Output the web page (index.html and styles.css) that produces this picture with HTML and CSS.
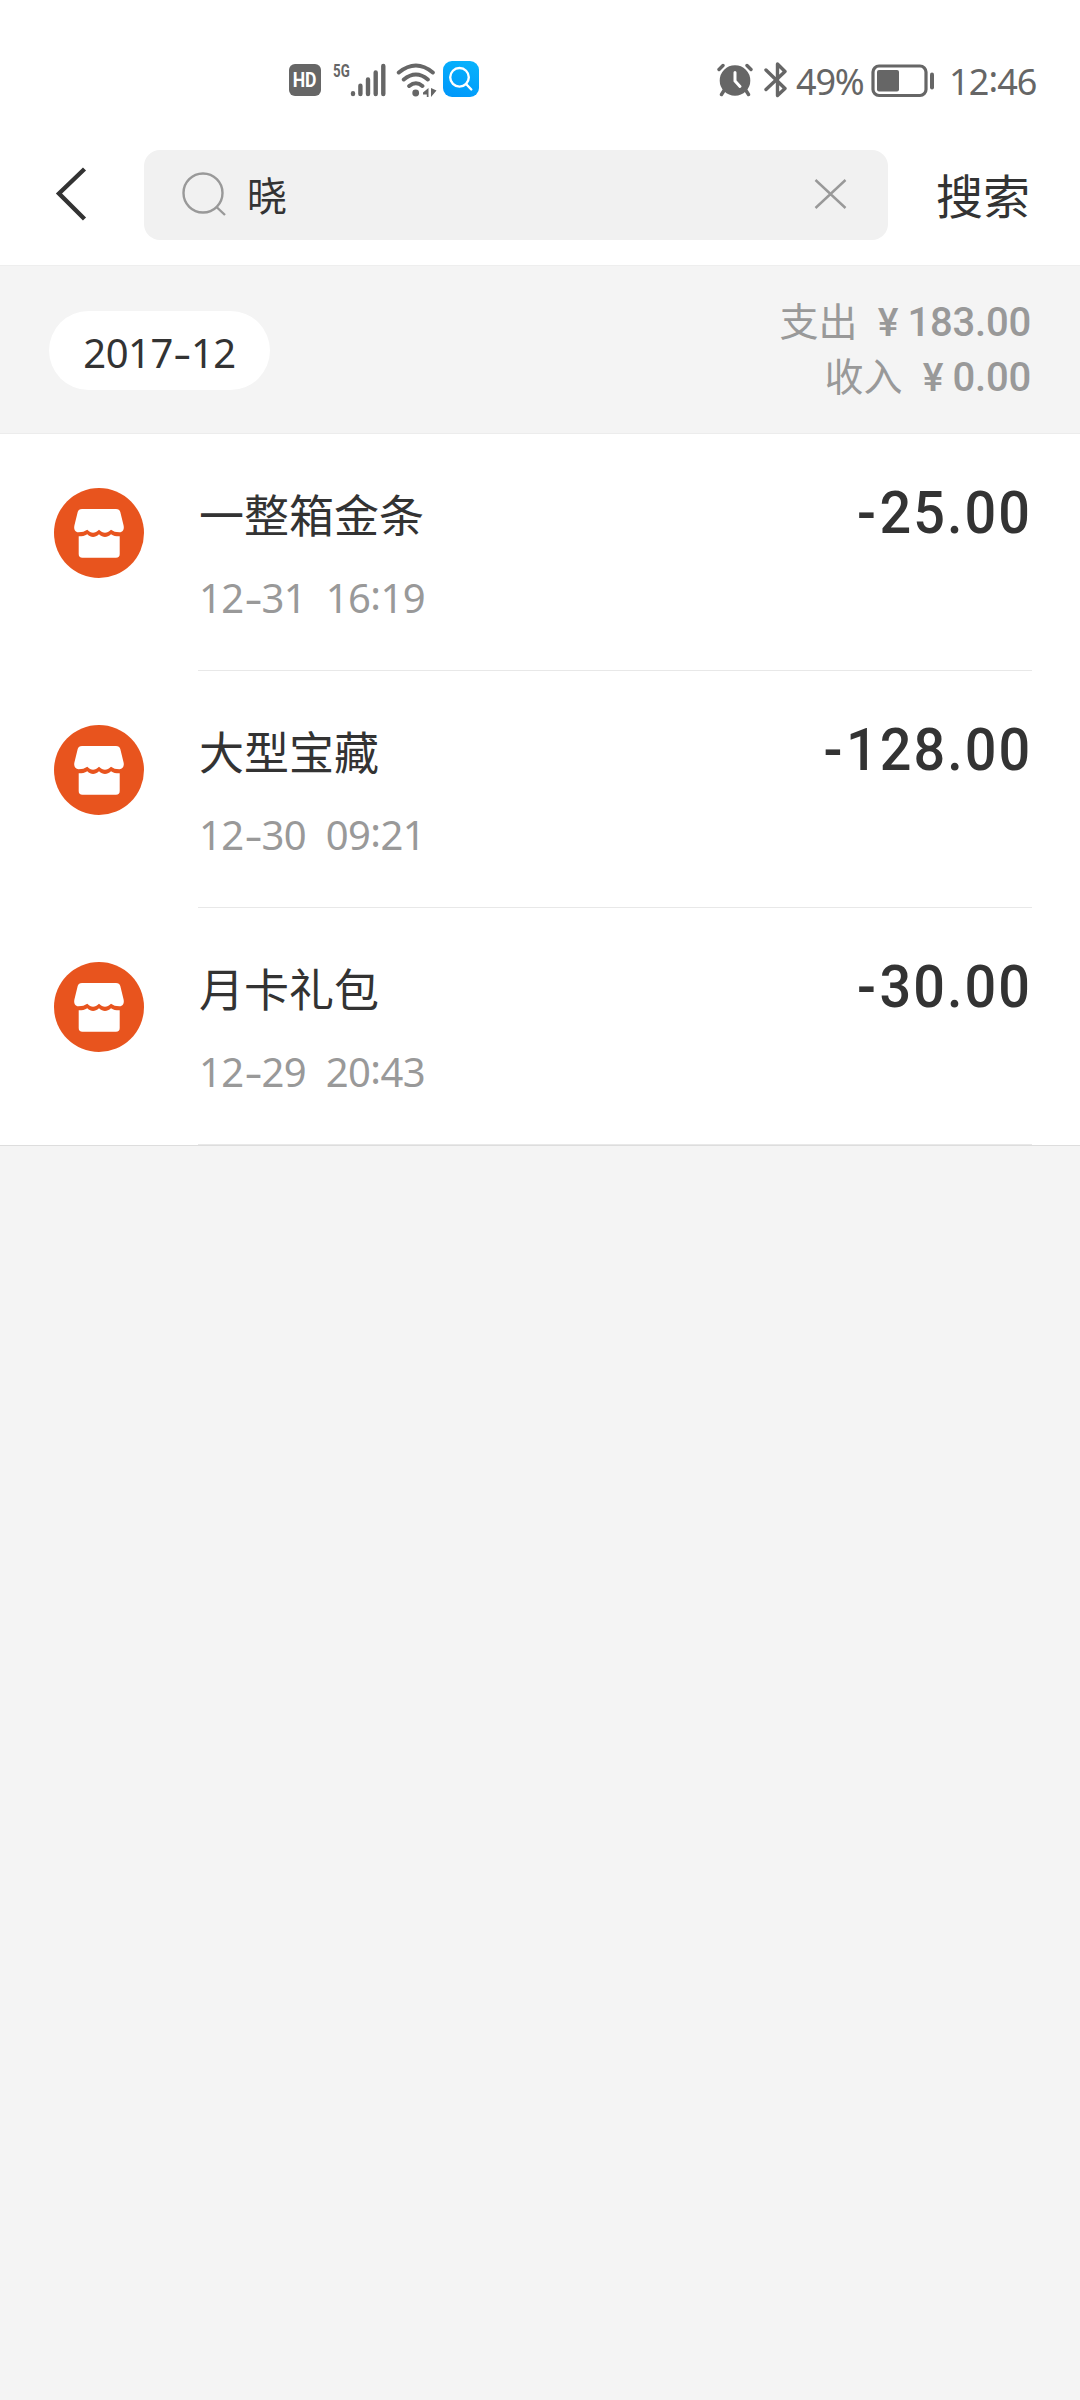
FILE: index.html
```html
<!DOCTYPE html>
<html lang="zh-CN">
<head>
    <meta charset="UTF-8">
    <meta name="viewport" content="width=device-width, initial-scale=1.0">
    <title>账单搜索</title>
    <link rel="stylesheet" href="styles.css">
</head>
<body>

    <!-- Shop icon shared by the rows -->
    <svg class="defs" width="0" height="0">
        <symbol id="shop" viewBox="0 0 90 90">
            <circle cx="45" cy="45" r="45" fill="#e8541e"/>
            <path fill="#fff" d="M28 21H62Q65.500 21 66.300 24L69.600 37.500C70.500 41.500 68.500 44.300 65.500 44.300C61.500 44.300 59.500 43.500 57 41.800C53 45.800 49 45.800 45 41.800C41 45.800 37 45.800 33.300 41.800C30.500 43.500 28.500 44.300 24.500 44.300C21.500 44.300 19.500 41.500 20.400 37.500L23.700 24Q24.500 21 28 21Z"/>
            <path fill="#fff" d="M24.700 48.300C28.500 48.300 30.500 48 33.300 46.300C37 50 41 50 45 46.300C49 50 53 50 57 46.300C59.500 48 61.500 48.300 65.700 48.300V66Q65.700 69.800 62 69.800H28.400Q24.700 69.800 24.700 66Z"/>
        </symbol>
    </svg>

    <!-- Status Bar -->
    <div class="status-bar">
        <div class="status-left">
            <div class="hd"><span>HD</span></div>
            <div class="network">5G</div>
            <svg class="signal" width="36" height="34" viewBox="0 0 36 34" stroke="#666" stroke-width="4.400" stroke-linecap="round">
                <path d="M3 30.200V31M10.400 22.800V31M18 16.500V31M25.700 9.500V31M33.300 3V31"/>
            </svg>
            <svg class="wifi" width="42" height="36" viewBox="0 0 42 36" fill="none" stroke="#666" stroke-width="4" stroke-linecap="round">
                <path d="M2.800 10.500Q20 -3.500 36.800 10.500M7.800 17.500Q20 7.500 31.800 17.500M13.200 24Q20 18.500 26.400 24"/>
                <circle cx="19.700" cy="31" r="3.400" fill="#666" stroke="none"/>
                <path d="M32.500 26V35H30.800V32.500H27V30.500ZM35 26L40.500 28.500L35 35Z" fill="#666" stroke="none"/>
            </svg>
            <div class="search-app">
                <svg width="36" height="36" viewBox="0 0 36 36" fill="none" stroke="#fff" stroke-width="2.400" stroke-linecap="round">
                    <circle cx="16.500" cy="16.300" r="9.300"/>
                    <path d="M23.300 23.200L28.300 28.500"/>
                </svg>
            </div>
        </div>
        <div class="status-right">
            <svg class="alarm" width="36" height="34" viewBox="0 0 36 34">
                <path d="M7 27.500L4.500 31.500M29 27.500L31.500 31.500M2 6.500L6 2.500M34 6.500L30 2.500" stroke="#666" stroke-width="3.400" stroke-linecap="round"/>
                <circle cx="18" cy="17.500" r="15.300" fill="#666"/>
                <path d="M18 9.500V18L23 23.500" fill="none" stroke="#fff" stroke-width="3" stroke-linecap="round"/>
            </svg>
            <svg class="bluetooth" width="24" height="36" viewBox="0 0 24 36" fill="none" stroke="#666" stroke-width="3.400" stroke-linecap="round" stroke-linejoin="round">
                <path d="M2 8L21 26.500L13.500 33.500V2L21 9.500L2 27.500"/>
            </svg>
            <div class="status-text percent">49%</div>
            <svg class="battery" width="64" height="34" viewBox="0 0 64 34">
                <rect x="2" y="2" width="53" height="29.500" rx="6" fill="none" stroke="#666" stroke-width="3.200"/>
                <rect x="6" y="6" width="22" height="21.500" rx="2" fill="#666"/>
                <rect x="59" y="8.500" width="4" height="17" rx="2" fill="#666"/>
            </svg>
            <div class="status-text clock">12<span class="colon">:</span>46</div>
        </div>
    </div>

    <!-- Search Bar -->
    <div class="search-container">
        <svg class="back" width="34" height="56" viewBox="0 0 34 56" fill="none" stroke="#333" stroke-width="4.400">
            <path d="M31.500 2L6 26.500L31.500 52"/>
        </svg>
        <div class="search-box">
            <svg class="search-icon" width="46" height="46" viewBox="0 0 46 46" fill="none" stroke="#999" stroke-width="2.400">
                <circle cx="22" cy="21" r="19.500"/>
                <path d="M35 34.500L44 43"/>
            </svg>
            <span class="search-text">晓</span>
            <svg class="clear" width="34" height="32" viewBox="0 0 34 32" stroke="#999" stroke-width="2.400">
                <path d="M2.500 2L32.500 30M32.500 2L2.500 30"/>
            </svg>
        </div>
        <span class="search-button">搜索</span>
    </div>

    <!-- Month summary -->
    <div class="summary">
        <div class="month">2017<span class="dash">-</span>12</div>
        <div class="totals">
            <div class="total"><span class="label">支出</span><span class="yen">¥</span>183.00</div>
            <div class="total"><span class="label">收入</span><span class="yen">¥</span>0.00</div>
        </div>
    </div>

    <div class="bill-list">
        <div class="bill-item">
            <svg class="shop" width="90" height="90"><use href="#shop"/></svg>
            <div class="bill-content">
                <div class="bill-info">
                    <div class="bill-name">一整箱金条</div>
                    <div class="bill-date">12<span class="dash">-</span>31  16<span class="colon">:</span>19</div>
                </div>
                <div class="amount"><span class="minus">-</span>25.00</div>
            </div>
        </div>
        <div class="bill-item">
            <svg class="shop" width="90" height="90"><use href="#shop"/></svg>
            <div class="bill-content">
                <div class="bill-info">
                    <div class="bill-name">大型宝藏</div>
                    <div class="bill-date">12<span class="dash">-</span>30  09<span class="colon">:</span>21</div>
                </div>
                <div class="amount"><span class="minus">-</span>128.00</div>
            </div>
        </div>
        <div class="bill-item">
            <svg class="shop" width="90" height="90"><use href="#shop"/></svg>
            <div class="bill-content">
                <div class="bill-info">
                    <div class="bill-name">月卡礼包</div>
                    <div class="bill-date">12<span class="dash">-</span>29  20<span class="colon">:</span>43</div>
                </div>
                <div class="amount"><span class="minus">-</span>30.00</div>
            </div>
        </div>
    </div>

</body>
</html>
```

FILE: styles.css
```css
* {
    box-sizing: border-box;
}
body {
    margin: 0;
    min-height: 2400px;
    font-family: "Noto Sans", "Noto Sans CJK SC", sans-serif;
    background-color: #f4f4f4;
    color: #333;
}
svg {
    display: block;
    flex-shrink: 0;
}
.defs {
    position: absolute;
}

/* status bar */
.status-bar {
    display: flex;
    justify-content: space-between;
    height: 136px;
    padding: 61px 43px 0 289px;
    background-color: #fff;
    color: #666;
}
.status-left, .status-right {
    display: flex;
    height: 38px;
}
.hd {
    width: 32px;
    height: 32px;
    margin-top: 3px;
    border-radius: 6px;
    background-color: #666;
    color: #fff;
    font: bold 20px/33px Roboto, sans-serif;
    text-align: center;
}
.hd span {
    display: inline-block;
    transform: scaleX(0.88);
}
.network {
    width: 17px;
    height: 17px;
    margin: 1px 0 0 12px;
    font: bold 19px/17px Roboto, sans-serif;
    transform: scaleX(0.7);
    transform-origin: left;
}
.signal {
    margin-top: 2px;
}
.wifi {
    margin: 1px 0 0 10px;
}
.search-app {
    width: 36px;
    height: 36px;
    margin-left: 5px;
    border-radius: 9px;
    background: linear-gradient(20deg, #0096fa, #08b4fc);
}
.status-text {
    font-size: 36px;
    line-height: 42px;
    white-space: nowrap;
}
.alarm {
    margin-top: 2px;
}
.bluetooth {
    margin: 1px 0 0 11px;
}
.percent {
    width: 75px;
    padding-left: 8px;
    letter-spacing: -1.2px;
}
.battery {
    margin: 3px 0 0 8px;
}
.clock {
    width: 88px;
    margin-left: 14px;
    letter-spacing: -0.9px;
}

/* search */
.search-container {
    display: flex;
    height: 130px;
    padding: 14px 48px 0 53px;
    background-color: #fff;
    border-bottom: 1px solid #eee;
}
.back {
    margin-top: 17px;
}
.search-box {
    display: flex;
    width: 744px;
    height: 90px;
    margin-left: 57px;
    padding: 0 41px 0 37px;
    border-radius: 16px;
    background-color: #f1f1f1;
}
.search-icon {
    margin-top: 22px;
}
.search-text {
    flex: 1;
    margin-left: 20px;
    font: 40px/89px "Noto Sans CJK SC", sans-serif;
}
.clear {
    margin-top: 28px;
}
.search-button {
    margin-left: 48px;
    font: 47px/88px "Noto Sans CJK SC", sans-serif;
    white-space: nowrap;
}

/* summary */
.summary {
    display: flex;
    justify-content: space-between;
    align-items: flex-start;
    height: 168px;
    padding: 29px 49px 0;
    border-bottom: 1px solid #ececec;
}
.month {
    width: 221px;
    height: 79px;
    margin-top: 16px;
    border-radius: 40px;
    background-color: #fff;
    font-size: 40px;
    line-height: 83px;
    letter-spacing: -0.5px;
    text-align: center;
}
.dash {
    display: inline-block;
    width: 18px;
    text-align: center;
    transform: scaleX(1.4);
}
.colon {
    vertical-align: 0.08em;
    line-height: 1;
}
.totals {
    color: #999;
    text-align: right;
}
.total {
    height: 55px;
    font: 500 40px/55px Roboto, "Noto Sans CJK SC", sans-serif;
    letter-spacing: -0.2px;
    white-space: nowrap;
}
.label {
    font-weight: 400;
    font-size: 39px;
    letter-spacing: 0;
}
.yen {
    display: inline-block;
    width: 50px;
    padding-left: 11px;
    text-align: center;
    font-size: 39px;
}

/* bills */
.bill-list {
    background-color: #fff;
    border-bottom: 1px solid #ddd;
}
.bill-item {
    display: flex;
    height: 237px;
    padding: 0 48px 0 54px;
}
.shop {
    margin-top: 54px;
}
.bill-content {
    display: flex;
    flex: 1;
    justify-content: space-between;
    margin-left: 54px;
    border-bottom: 1px solid #e8e8e8;
}
.bill-info {
    padding: 50px 0 0 1px;
}
.bill-name {
    font: 45px/60px "Noto Sans CJK SC", sans-serif;
}
.bill-date {
    height: 50px;
    margin-top: 29px;
    color: #999;
    font-size: 40px;
    line-height: 50px;
    letter-spacing: -0.6px;
    white-space: pre;
}
.amount {
    padding-top: 49px;
    font: 500 60px/60px Roboto, sans-serif;
    letter-spacing: 2.2px;
    white-space: nowrap;
    transform: scaleX(0.93);
    transform-origin: right;
}
.minus {
    display: inline-block;
    width: 26px;
    text-align: center;
}
```
